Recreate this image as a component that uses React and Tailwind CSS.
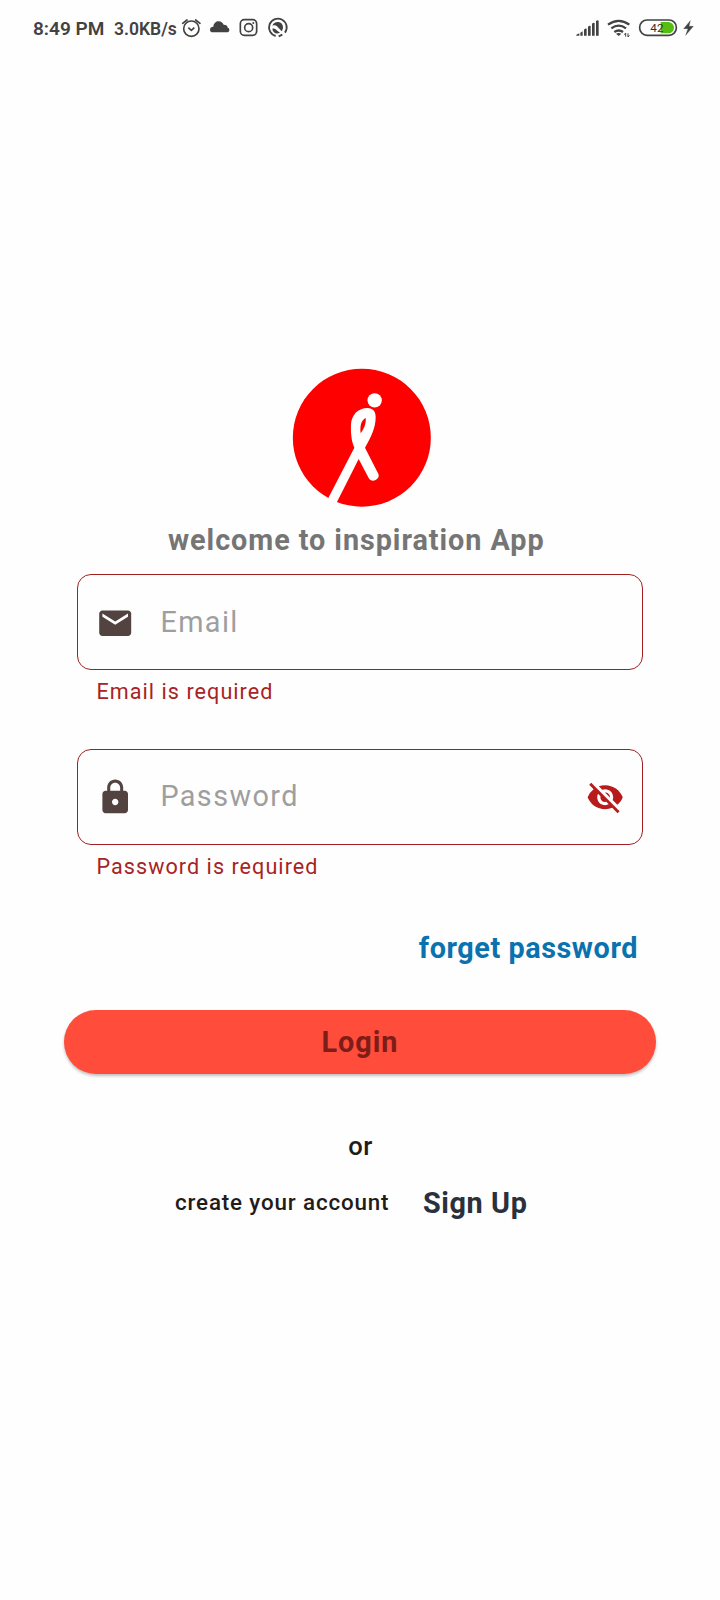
import React from "react";
import { MdEmail, MdLock, MdVisibilityOff } from "react-icons/md";

function StatusBar() {
  return (
    <header className="flex h-[56px] shrink-0 items-center pl-[33px] pr-[21px] text-[#424242]">
      <span className="w-[81px] whitespace-nowrap pt-px text-[19px] leading-[22px] font-semibold">8:49 PM</span>
      <span className="w-[67px] whitespace-nowrap pt-px text-[17.500px] leading-[22px] font-semibold">3.0KB/s</span>
      <svg className="h-[40px] w-[119px]" viewBox="0 0 357 120" fill="none" stroke="#424242">
        <circle cx="31" cy="62" r="23" strokeWidth="5" />
        <path d="M5 46 18 36M57 46 44 36" strokeWidth="5" strokeLinecap="round" />
        <path d="m22 59 9 8 9-8" strokeWidth="5" strokeLinejoin="round" />
        <path d="M96 73c-6 0-9-3-9-8 0-6 4-9 10-9 1-10 8-16 16-16 7 0 12 4 15 10 8 0 12 3 12 9 4 1 5 3 5 7 0 5-3 7-7 7z" fill="#424242" stroke="none" />
        <rect x="178" y="35" width="49" height="47" rx="12" strokeWidth="5" />
        <circle cx="203" cy="59" r="12" strokeWidth="5" />
        <circle cx="217" cy="45" r="3" fill="#424242" stroke="none" />
        <path d="M284 84A26.500 26.500 0 1 1 312 74M304 80 293 85" strokeWidth="5.500" />
        <path d="M274 53c3-8 10-12 18-11 8 1 14 7 14 15 0 6-2 10-4 13L288 55c-4-4-8-4-14-2z" fill="#424242" stroke="none" />
        <path d="M274 62c5-2 9 0 13 5l10 7c-11 6-22-1-23-12z" fill="#424242" stroke="none" />
      </svg>
      <svg className="ml-auto h-[40px] w-[124px]" viewBox="45 0 372 120" fill="none" stroke="#424242">
        <path d="M49 83v-3l9-4v7zM61 83v-9l7-4v13zM72 83v-18q4-5 8-3v21zM84 83v-27q4-5 8-2v29zM96 83v-36q4-5 8-2v38zM108 83v-44q4-4 8-1v45z" fill="#424242" stroke="none" />
        <path d="M144 50q32-23 64 0M154 61q22-16 44 0M163 72q13-9 26 0" strokeWidth="7" />
        <path d="M168 77q8-4 16 0l-8 7z" fill="#424242" stroke="none" />
        <path d="M197 75v11M193 80l4-5M204 76v11l4-5" strokeWidth="3" />
        <rect x="239" y="36" width="110" height="46" rx="22" strokeWidth="5" />
        <path d="M302 42h23a17 17 0 0 1 0 34h-23z" fill="#54be13" stroke="none" />
        <text x="271" y="72" fill="#333" stroke="none" className="font-[Roboto,sans-serif] text-[35px]">42</text>
        <path d="m391 38-20 24h13l-7 20 23-27h-13z" fill="#424242" stroke="#424242" strokeWidth="1" />
      </svg>
    </header>
  );
}

function Logo() {
  return (
    <svg className="h-[155px] w-[160px]" viewBox="0 0 480 465" aria-hidden="true">
      <circle cx="245.500" cy="233" r="207" fill="#fe0000" />
      <circle cx="284" cy="121" r="21.500" fill="#fff" />
      <path d="M143 418 223 263C213 240 212 213 213 192 215 163 236 144 262 144 279 144 287 155 287 171 287 205 273 231 255 263L294 340C304 356 276 372 266 354L236 297 169 430z" fill="#fff" />
      <path d="M242 220C239 200 243 181 257 174 259 190 252 206 242 220z" fill="#fe0000" />
    </svg>
  );
}

function Field({ icon, label, labelClass, error, trailing }) {
  return (
    <div>
      <div className="flex h-[96px] items-center rounded-[14px] border-[1.600px] border-[#a02020] pl-[18px] pr-[18px]">
        {icon}
        <span className={"ml-[26px] grow text-[28.800px] leading-[34px] tracking-[1.400px] text-[#9e9e9e] " + labelClass}>{label}</span>
        {trailing}
      </div>
      <p className="pl-[19.500px] pt-[9px] text-[21.600px] leading-[26px] tracking-[1.040px] text-[#a82323]">{error}</p>
    </div>
  );
}

export default function App() {
  return (
    <main className="flex h-[1600px] w-[720px] flex-col overflow-hidden bg-[#fefefe] font-[Roboto,sans-serif]">
      <StatusBar />
      <div className="mt-[304px] flex justify-center">
        <Logo />
      </div>
      <h1 className="mt-[8px] pl-[168px] text-[28.800px] leading-[34px] font-bold whitespace-nowrap tracking-[0.940px] text-[#757575]">
        welcome to inspiration App
      </h1>
      <section className="mt-[17px] flex flex-col gap-[44px] pl-[77px] pr-[77px]">
        <Field
          icon={<MdEmail className="mt-[2px] size-[38.400px] shrink-0 text-[#524340]" />}
          label="Email"
          labelClass="mt-[-1px]"
          error="Email is required"
        />
        <Field
          icon={<MdLock className="size-[38.400px] shrink-0 text-[#524340]" />}
          label="Password"
          labelClass="mt-[-3px]"
          error="Password is required"
          trailing={<MdVisibilityOff className="size-[38.400px] shrink-0 text-[#b91a1c]" />}
        />
      </section>
      <div className="mt-[51px] flex justify-end pr-[82px] text-[28.800px] leading-[34px] font-bold text-[#0a72ae]">
        <span className="tracking-[0.560px]">forget password</span>
      </div>
      <button className="mx-[64px] mt-[45px] h-[64px] shrink-0 rounded-full bg-[#ff4c3b] text-[28.800px] leading-[34px] font-bold tracking-[0.960px] text-[#7c1d18] shadow-[0_2px_3px_rgba(0,0,0,0.25)]">
        Login
      </button>
      <p className="mt-[57px] pl-px text-center text-[25.600px] leading-[30px] font-medium tracking-[0.500px] text-[#231b1a]">or</p>
      <div className="mt-[23px] flex items-center pl-[175px]">
        <span className="w-[248px] whitespace-nowrap text-[22.400px] leading-[34px] font-medium tracking-[0.840px] text-[#231b1a]">create your account</span>
        <span className="mt-px mb-[-1px] text-[28.800px] leading-[36px] font-bold tracking-[0.600px] text-[#2a303c]">Sign Up</span>
      </div>
    </main>
  );
}
